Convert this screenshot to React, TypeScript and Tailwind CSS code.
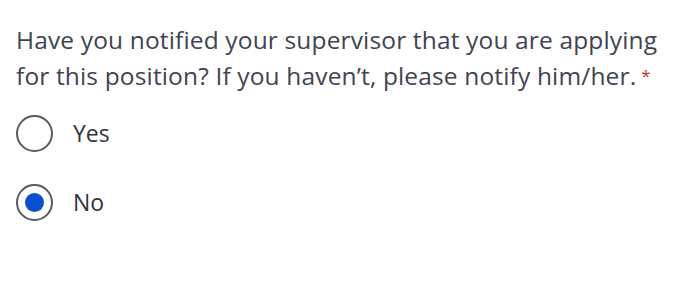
import React from "react";

export default function App() {
  const font = { fontFamily: '"Open Sans", "Noto Sans", sans-serif' };
  return (
    <div className="w-[700px] h-[282px] bg-white text-[#3f4452]" style={font}>
      <div className="pl-4 pt-[22px]">
        <p className="text-[24.5px] leading-[36px] tracking-[0.15px] whitespace-nowrap">
          Have you notified your supervisor that you are applying
          <br />
          for this position? If you haven’t, please notify him/her.
          <span className="ml-[5px] text-[#c0392b] text-[17px] align-top">*</span>
        </p>
        <div className="mt-[21px] flex flex-col gap-[32px]">
          <label className="flex items-center gap-[20px]">
            <span className="w-[37px] h-[37px] rounded-full border-2 border-[#5a5a5a] flex items-center justify-center" />
            <span className="text-[23px] text-[#2f3340]">Yes</span>
          </label>
          <label className="flex items-center gap-[20px]">
            <span className="w-[37px] h-[37px] rounded-full border-2 border-[#5a5a5a] flex items-center justify-center">
              <span className="w-[19px] h-[19px] rounded-full bg-[#0a4fd0]" />
            </span>
            <span className="text-[23px] text-[#2f3340]">No</span>
          </label>
        </div>
      </div>
    </div>
  );
}
